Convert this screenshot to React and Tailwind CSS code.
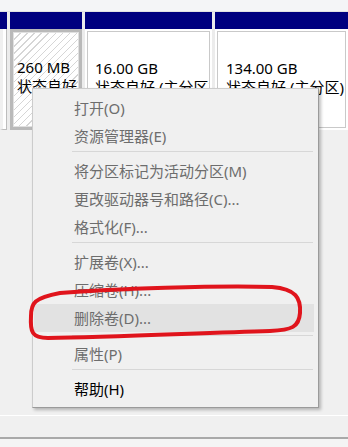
import React from "react";

const FONT = { fontFamily: '"Noto Sans", "Noto Sans CJK SC", sans-serif' };

const items = [
  { t: "打开(O)" },
  { t: "资源管理器(E)" },
  { sep: true },
  { t: "将分区标记为活动分区(M)" },
  { t: "更改驱动器号和路径(C)..." },
  { t: "格式化(F)..." },
  { sep: true },
  { t: "扩展卷(X)..." },
  { t: "压缩卷(H)..." },
  { t: "删除卷(D)...", hl: true },
  { sep: true, big: true },
  { t: "属性(P)" },
  { sep: true },
  { t: "帮助(H)", en: true },
];

function Header() {
  return <div className="h-[17px] bg-[#00007f] shrink-0" />;
}

export default function App() {
  return (
    <div
      className="relative w-[348px] h-[447px] overflow-hidden bg-[#f0f0f0] text-black"
      style={FONT}
    >
      {/* top strip */}
      <div className="h-[12px] bg-[#f4f5f7] border-b border-[#e2e2e2]" />

      {/* partitions row */}
      <div className="flex h-[118px] bg-[#ececec] gap-[3px]">
        {/* col A (partial) */}
        <div className="w-[7px] flex flex-col">
          <Header />
          <div className="flex-1 bg-white border-l-[3px] border-[#f0f0f0] border-r border-r-[#bdbdbd] border-b border-b-[#bdbdbd]" />
        </div>

        {/* col B */}
        <div className="w-[72px] flex flex-col">
          <Header />
          <div className="flex-1 bg-[#b9b9b9] p-[3px]">
            <div className="h-full bg-[repeating-linear-gradient(135deg,#ffffff_0px,#ffffff_4px,#d6d6d6_4px,#d6d6d6_5px)] border border-[#e0e0e0] overflow-hidden pl-[3px] pt-[25px] text-[15px] leading-[19px] whitespace-nowrap">
              <div>260 MB</div>
              <div>状态良好</div>
            </div>
          </div>
        </div>

        {/* col C */}
        <div className="w-[127px] flex flex-col">
          <Header />
          <div className="flex-1 bg-white p-[2px]">
            <div className="h-full border border-[#c9c9c9] overflow-hidden pl-[7px] pt-[27px] text-[15px] leading-[19px] whitespace-nowrap">
              <div>16.00 GB</div>
              <div>状态良好 (主分区)</div>
            </div>
          </div>
        </div>

        {/* col D */}
        <div className="flex-1 flex flex-col">
          <Header />
          <div className="flex-1 bg-white p-[2px]">
            <div className="h-full border border-[#c9c9c9] overflow-hidden pl-[8px] pt-[27px] text-[15px] leading-[19px] whitespace-nowrap">
              <div>134.00 GB</div>
              <div>状态良好 (主分区)</div>
            </div>
          </div>
        </div>
      </div>

      {/* lower area */}
      <div className="h-[286px] border-b border-white" />
      <div className="h-[23px] bg-[#f0f0f0] border-b-2 border-[#a9a9a9]" />
      <div className="h-[10px] bg-[#f4f4f4]" />

      {/* context menu */}
      <div className="absolute left-[32px] top-[88px] w-[287px] h-[320px] bg-[#f0f0f0] border border-[#cccccc] border-r-[#9a9a9a] border-b-[#9a9a9a] shadow-[2px_2px_3px_rgba(0,0,0,0.25)] pt-[5px] text-[15px]">
        {items.map((it, i) =>
          it.sep ? (
            <div key={i} className={it.big ? "h-[8px] pt-[3px]" : "h-[7px] pt-[1px]"}>
              <div className="ml-[39px] mr-[5px] h-px bg-[#d7d7d7]" />
            </div>
          ) : (
            <div
              key={i}
              className={
                "h-[28px] ml-[1px] mr-[4px] pl-[40px] flex items-center whitespace-nowrap " +
                (it.hl ? "bg-[#e2e2e2] " : "") +
                (it.en ? "text-black" : "text-[#6d6d6d]")
              }
            >
              {it.t}
            </div>
          )
        )}
      </div>

      {/* red hand-drawn mark */}
      <svg
        className="absolute left-0 top-0 pointer-events-none"
        width="348"
        height="447"
        viewBox="0 0 348 447"
      >
        <path
          d="M 60 293 C 110 289, 220 285, 272 287 C 296 289, 301 298, 300 313 C 299 327, 292 330, 270 331 C 200 333, 110 337, 48 338 C 32 338, 30 332, 31 316 C 31 303, 34 298, 60 293"
          fill="none"
          stroke="#e0141c"
          strokeWidth="4"
          strokeLinecap="round"
        />
      </svg>
    </div>
  );
}
